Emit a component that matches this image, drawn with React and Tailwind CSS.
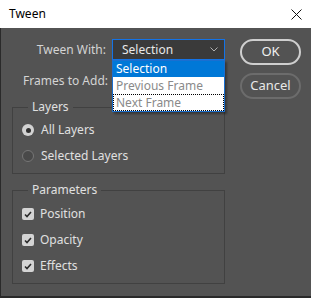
import React from 'react';

const font = { fontFamily: '"Noto Sans", "Open Sans", sans-serif' };

const Radio = ({ checked, label }) => (
  <div className="flex items-center h-[26px]">
    {checked ? (
      <span className="w-[12px] h-[12px] rounded-full bg-[#d2d2d2] flex items-center justify-center">
        <span className="w-[5px] h-[5px] rounded-full bg-[#303030]" />
      </span>
    ) : (
      <span className="w-[12px] h-[12px] rounded-full border border-[#767676] bg-[#494949]" />
    )}
    <span className="ml-[7px] text-[12px] text-[#e0e0e0]">{label}</span>
  </div>
);

const Check = ({ label }) => (
  <div className="flex items-center h-[26px]">
    <span className="w-[12px] h-[12px] rounded-[2px] bg-[#d4d4d4] flex items-center justify-center">
      <svg width="8" height="7" viewBox="0 0 8 7">
        <path d="M1 3.5 L3 5.5 L7 1" fill="none" stroke="#2a2a2a" strokeWidth="1.6" />
      </svg>
    </span>
    <span className="ml-[6px] text-[12px] text-[#e0e0e0]">{label}</span>
  </div>
);

export default function App() {
  return (
    <div className="w-[311px] h-[298px] flex flex-col bg-[#535353]" style={font}>
      {/* title bar */}
      <div className="h-[28px] bg-white flex items-center justify-between pl-[9px] pr-[9px]">
        <span className="text-[12px] text-black">Tween</span>
        <svg width="11" height="11" viewBox="0 0 11 11">
          <path d="M0.5 0.5 L10.5 10.5 M10.5 0.5 L0.5 10.5" stroke="#111" strokeWidth="1" />
        </svg>
      </div>

      <div className="flex-1 flex border-l border-b-2 border-[#2a2a2a] pt-[11px]">
        {/* left column */}
        <div className="w-[224px] flex flex-col">
          <div className="flex items-center h-[21px]">
            <span className="w-[105px] text-right text-[12px] text-[#d4d4d4]">Tween With:</span>
            <div className="relative ml-[6px] w-[113px] h-[21px]">
              <div className="h-full border border-[#1473e6] bg-[#3a3a3a] flex items-center justify-between pl-[9px] pr-[6px]">
                <span className="text-[12px] text-[#e8e8e8]">Selection</span>
                <svg width="8" height="5" viewBox="0 0 8 5">
                  <path d="M0.5 0.5 L4 4 L7.5 0.5" fill="none" stroke="#b0b0b0" strokeWidth="1" />
                </svg>
              </div>
              <div className="absolute left-0 top-full w-full bg-white border border-[#1a6fd0] shadow-[2px_2px_2px_rgba(0,0,0,0.35)] z-10">
                <div className="h-[16px] bg-[#0078d7] text-white text-[12px] leading-[16px] pl-[3px]">Selection</div>
                <div className="h-[17px] text-[#8a8a8a] text-[12px] leading-[17px] pl-[3px]">Previous Frame</div>
                <div className="h-[17px] text-[#8a8a8a] text-[12px] leading-[15px] pl-[2px] border border-dotted border-black">Next Frame</div>
              </div>
            </div>
          </div>

          <div className="flex items-center h-[21px] mt-[10px]">
            <span className="w-[107px] text-right text-[12px] text-[#d4d4d4]">Frames to Add:</span>
          </div>

          <fieldset className="mt-[8px] ml-[11px] w-[213px] border border-[#414141] pl-[9px] pb-[4px]">
            <legend className="ml-[6px] px-[4px] text-[12px] leading-[16px] text-[#e0e0e0]">Layers</legend>
            <div className="mt-[2px]">
              <Radio checked label="All Layers" />
              <Radio label="Selected Layers" />
            </div>
          </fieldset>

          <fieldset className="mt-[8px] ml-[11px] w-[213px] border border-[#414141] pl-[9px] pb-[4px]">
            <legend className="ml-[6px] px-[4px] text-[12px] leading-[16px] text-[#e0e0e0]">Parameters</legend>
            <div className="mt-[3px]">
              <Check label="Position" />
              <Check label="Opacity" />
              <Check label="Effects" />
            </div>
          </fieldset>
        </div>

        {/* buttons */}
        <div className="ml-[15px] w-[61px] flex flex-col">
          <button className="h-[26px] rounded-full border-2 border-[#cfcfcf] text-[13px] text-[#f0f0f0]">OK</button>
          <button className="h-[26px] mt-[8px] rounded-full border-2 border-[#6c6c6c] text-[13px] text-[#e8e8e8]">Cancel</button>
        </div>
      </div>
    </div>
  );
}
